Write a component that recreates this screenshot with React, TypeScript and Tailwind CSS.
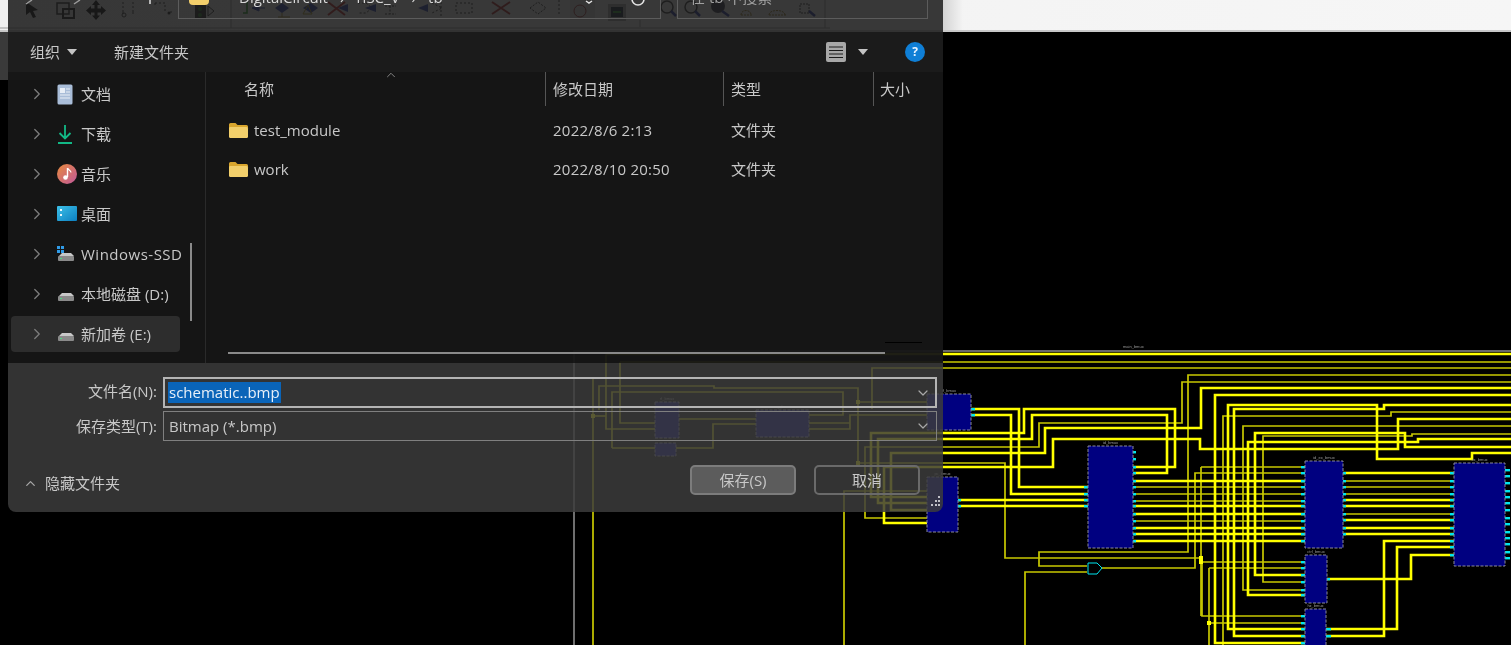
import { ChevronRight, ChevronUp, ChevronDown } from "lucide-react";

// wires: bright thick, normal, dim thin
const thickWires = [
  "M971 409H1019V487H1088",
  "M971 415H1011V494H1088",
  "M958 500H1088",
  "M958 506H1088",
  "M1133 467H1175V409H1024V433H871V497H927",
  "M1133 473H1167V415H1032V439H878V503H927",
  "M927 523H884V467H1053V439H1200V449H1398V419H1511",
  "M927 510H891V453H1045V428H1201V388H1511",
  "M1511 395H1215V643H1305",
  "M606 354H1511",
  "M1133 481H1305",
  "M1133 506H1305",
  "M1133 514H1305",
  "M1133 528H1305",
  "M1133 534H1305",
  "M1133 541H1305",
  "M1343 473H1454",
  "M1343 500H1454",
  "M1343 506H1454",
  "M1343 520H1454",
  "M1343 528H1454",
  "M1343 534H1454",
  "M1326 636H1384V541H1454",
  "M1326 629H1397V547H1454",
  "M1327 579H1411V555H1454",
  "M1511 447H1405V433H1255V575H1305",
  "M1511 439H1418V442H1248V595H1305",
  "M1511 453H1472V459H1377V405H1228V629H1305",
  "M1511 405H1384V409H1234V636H1305",
];

const thinWires = [
  "M927 518H865V447H1039V423H1182V382H1511",
  "M1087 566H1039V552H1188V375H1511",
  "M620 362H1511",
  "M872 409V368H1511",
  "M858 463H1005V558H1202V616H1305",
  "M599 410V386H714V388H858V463",
  "M858 402H927",
  "M570 378H593V645",
  "M593 416H606",
  "M606 354V429H655",
  "M620 362V423H655",
  "M612 448V392H843V415H809",
  "M612 448H655",
  "M679 419H756",
  "M756 424H713V448H676",
  "M809 423H850",
  "M809 429H850V415H927",
  "M844 645V491H927",
  "M1133 487H1305",
  "M1133 494H1305",
  "M1133 501H1305",
  "M1133 521H1305",
  "M1343 481H1454",
  "M1343 487H1454",
  "M1343 494H1454",
  "M1343 514H1454",
  "M1102 568H1195V473H1305",
  "M1201 467H1305",
  "M1201 467V616",
  "M1202 562H1305",
  "M1209 568H1305",
  "M1209 568V645",
  "M1209 623H1305",
  "M1511 434H1412V436H1263V582H1305",
  "M1511 426H1243V590H1305",
  "M1511 412H1391V416H1223V645",
  "M1025 645V572H1087",
];

const blocks = [
  { x: 927, y: 394, w: 44, h: 36, label: "if_bmux" },
  { x: 927, y: 477, w: 31, h: 55, label: "pc_bmux" },
  { x: 1088, y: 446, w: 45, h: 102, label: "id_bmux" },
  { x: 1305, y: 461, w: 38, h: 87, label: "id_ex_bmux" },
  { x: 1305, y: 555, w: 22, h: 48, label: "ctrl_bmux" },
  { x: 1305, y: 609, w: 21, h: 50, label: "hz_bmux" },
  { x: 1454, y: 463, w: 51, h: 103, label: "ex_bmux" },
  { x: 655, y: 402, w: 24, h: 36, label: "rf_bmux" },
  { x: 655, y: 443, w: 21, h: 13, label: "" },
  { x: 756, y: 410, w: 53, h: 27, label: "reg_bmux" },
];

// cyan pins [x, y, w]
const pinRows: [number, number[], number][] = [
  [971, [409, 415], 4],
  [958, [500, 506], 3],
  [1084, [487, 494, 500, 506], 4],
  [1133, [452, 459, 467, 473, 481, 487, 494, 501, 506, 514, 521, 528, 534, 541], 3],
  [1301, [467, 473, 481, 487, 494, 501, 506, 514, 521, 528, 534, 541, 562, 568, 575, 582, 590, 595, 616, 623, 629, 636, 643], 4],
  [1343, [473, 481, 487, 494, 500, 506, 514, 520, 528, 534], 3],
  [1327, [579], 3],
  [1326, [629, 636], 5],
  [1450, [473, 481, 487, 494, 500, 506, 514, 520, 528, 534, 541, 547, 555], 4],
  [1505, [470, 476, 483, 491, 497, 503, 510, 518, 524, 532, 538, 544, 552, 558], 5],
];

function Schematic() {
  return (
    <svg className="block h-[613px] w-[1511px]" viewBox="0 32 1511 613">
      <rect x="0" y="32" width="70" height="48" fill="#3a3a3a" />
      <text x="1123" y="348" fontSize="4" fill="#999" fontFamily="Liberation Sans">main_bmux</text>
      <path d="M574 645V351H1511" fill="none" stroke="#8a8a8a" strokeWidth="1.6" />
      {thinWires.map((d) => (
        <path key={d} d={d} fill="none" stroke="#c8c800" strokeWidth="1.7" />
      ))}
      {thickWires.map((d) => (
        <path key={d} d={d} fill="none" stroke="#ffff00" strokeWidth="2.6" />
      ))}
      {pinRows.map(([x, ys, w]) =>
        ys.map((y) => <rect key={`${x}-${y}`} x={x} y={y - 1} width={w} height="2.4" fill="#00e6f0" />)
      )}
      {blocks.map((b) => (
        <g key={b.x + "-" + b.y}>
          <rect x={b.x} y={b.y} width={b.w} height={b.h} fill="#000080" stroke="#8a8a9a" strokeWidth="1" strokeDasharray="3 1.5" />
          <text x={b.x + b.w / 2} y={b.y - 2} fontSize="4" textAnchor="middle" fill="#999" fontFamily="Liberation Sans">
            {b.label}
          </text>
        </g>
      ))}
      <path d="M1088 563H1097L1102 568L1097 574H1088Z" fill="#000" stroke="#00e6f0" strokeWidth="1" />
      <rect x="1199" y="556" width="4" height="8" fill="#ffff00" />
      <rect x="1207" y="621" width="4" height="4" fill="#ffff00" />
      <rect x="856" y="400" width="4" height="4" fill="#ffff00" />
      <rect x="856" y="461" width="4" height="4" fill="#ffff00" />
      <rect x="591" y="414" width="4" height="4" fill="#ffff00" />
    </svg>
  );
}

// the app toolbar that shows through the dialog's top strip
function AppToolbar() {
  return (
    <svg className="block h-[32px] w-[943px] shrink-0" viewBox="0 0 943 32">
      <path d="M26 2L26 15L30 12L33 18L36 17L33 11L38 10Z" fill="#000" />
      <rect x="57" y="3" width="12" height="11" fill="none" stroke="#222" strokeWidth="1.5" />
      <rect x="63" y="9" width="11" height="9" fill="none" stroke="#111" strokeWidth="2" />
      <path d="M96 0L100 5H97.5V8.5H101V6L106 10.5L101 15V12.5H97.5V15.5H100L96 20L92 15.5H94.5V12.5H91V15L86 10.5L91 6V8.5H94.5V5H92Z" fill="#000" />
      <path d="M123 2V12M133 2V12M123 12V16M133 12V16" stroke="#333" strokeDasharray="2 2" fill="none" />
      <circle cx="124" cy="15" r="2" fill="none" stroke="#333" />
      <path d="M155 3H165V13M155 3V6M170 12H173" stroke="#333" strokeDasharray="2 2" fill="none" />
      <circle cx="169" cy="13" r="1.5" fill="#222" />
      <rect x="195" y="3" width="11" height="16" rx="1" fill="#222" />
      <circle cx="200" cy="9" r="2" fill="#1f7a1f" />
      <circle cx="200" cy="15" r="2" fill="#1f7a1f" />
      <path d="M208 6L214 11L208 16Z" fill="none" stroke="#333" />
      <path d="M247 2V13H243" stroke="#1a9a1a" strokeWidth="1.5" fill="none" />
      <path d="M252 8L259 5V11ZM259 8H265" fill="#2b3fb0" stroke="#2b3fb0" />
      <path d="M275 8L282 3L289 8L282 13Z" fill="#2b3fb0" />
      <path d="M282 13V17M278 17H290" stroke="#a88a20" fill="none" />
      <path d="M303 8L311 3L318 8L311 13Z" fill="#2b3fb0" />
      <path d="M303 14L308 5L312 14Z" fill="none" stroke="#b09a20" />
      <path d="M328 2L345 15M345 2L328 15" stroke="#c02020" strokeWidth="2" />
      <path d="M338 8L348 4V12Z" fill="#2b3fb0" />
      <path d="M358 3H366L372 8L366 13H358" stroke="#333" strokeDasharray="2 2" fill="none" />
      <path d="M365 8L376 4V12Z" fill="#2b3fb0" />
      <path d="M385 6H396M390 6V14M385 14L396 14" stroke="#333" strokeDasharray="2 1.5" fill="none" />
      <path d="M418 8L428 4V12Z" fill="#2b3fb0" />
      <path d="M432 3L442 8L432 13" stroke="#333" strokeDasharray="2 2" fill="none" />
      <path d="M441 2V17" stroke="#333" strokeDasharray="2 2" />
      <rect x="456" y="3" width="16" height="10" fill="none" stroke="#333" strokeDasharray="2 2" />
      <path d="M492 2L510 14M510 2L492 14" stroke="#b02020" strokeWidth="2" />
      <path d="M530 8L538 2L546 8L538 14Z" fill="none" stroke="#333" strokeDasharray="2 1.5" />
      <path d="M559 0V16" stroke="#333" strokeDasharray="2 2" />
      <rect x="570" y="0" width="25" height="20" fill="#ddd" />
      <circle cx="580" cy="11" r="6" fill="none" stroke="#a03030" />
      <rect x="608" y="4" width="18" height="17" fill="#aaa" />
      <rect x="611" y="7" width="12" height="10" fill="#123" />
      <path d="M613 12H621" stroke="#2a9a2a" strokeWidth="2" />
      <circle cx="667" cy="7" r="6" fill="none" stroke="#333" strokeWidth="1.5" />
      <path d="M671 11L676 16" stroke="#2330a0" strokeWidth="2.5" />
      <circle cx="691" cy="7" r="6" fill="none" stroke="#333" strokeWidth="1.5" />
      <path d="M695 11L700 16" stroke="#2330a0" strokeWidth="2.5" />
      <circle cx="718" cy="6" r="7" fill="#334" />
      <path d="M722 11L729 16" stroke="#2330a0" strokeWidth="2.5" />
      <path d="M741 15C741 9 751 9 751 15M741 15H753" stroke="#9a7a20" fill="none" strokeDasharray="2 1" />
      <path d="M769 15C769 9 785 9 785 15M769 15H787" stroke="#9a7a20" fill="none" strokeDasharray="2 1" />
      <rect x="800" y="4" width="9" height="9" fill="none" stroke="#333" strokeDasharray="2 1" />
      <path d="M809 11L815 16" stroke="#2330a0" strokeWidth="2.5" />
      <path d="M0 28H830" stroke="#999" />
      <path d="M231 0V28M640 20V27M825 0V28" stroke="#999" />
    </svg>
  );
}

function FolderIcon() {
  return (
    <svg width="21" height="17" viewBox="0 0 21 17">
      <path d="M1 2.5Q1 1 2.5 1H7.5L9.5 3H18.5Q20 3 20 4.5V6H1Z" fill="#d9a62e" />
      <path d="M1 6Q1 5 2.5 5H18.5Q20 5 20 6.5V14.5Q20 16 18.5 16H2.5Q1 16 1 14.5Z" fill="#f2cf6b" />
    </svg>
  );
}

function DocIcon() {
  return (
    <svg width="16" height="21" viewBox="0 0 16 21">
      <rect x="0.5" y="0.5" width="15" height="20" rx="1.5" fill="#a9bdd8" />
      <rect x="3" y="4" width="5" height="5" fill="#e8eef6" />
      <path d="M9 5H13M9 8H13M3 11H13M3 14H13" stroke="#e8eef6" />
    </svg>
  );
}

function DownloadIcon() {
  return (
    <svg width="16" height="21" viewBox="0 0 16 21">
      <path d="M8 1V14M2.5 9L8 14.5L13.5 9" fill="none" stroke="#12b886" strokeWidth="1.8" />
      <path d="M1 19H15" stroke="#12b886" strokeWidth="1.8" />
    </svg>
  );
}

function MusicIcon() {
  return (
    <svg width="20" height="20" viewBox="0 0 20 20">
      <defs>
        <linearGradient id="music" x1="0" y1="0" x2="1" y2="1">
          <stop offset="0" stopColor="#e88a3c" />
          <stop offset="1" stopColor="#c0589c" />
        </linearGradient>
      </defs>
      <circle cx="10" cy="10" r="10" fill="url(#music)" />
      <path d="M10.5 4V13" stroke="#fff" strokeWidth="1.4" />
      <path d="M10.5 4C11 6 14 6 14 8.5" fill="none" stroke="#fff" strokeWidth="1.2" />
      <circle cx="8.5" cy="13.5" r="2.3" fill="#fff" />
    </svg>
  );
}

function DesktopIcon() {
  return (
    <svg width="20" height="16" viewBox="0 0 20 16">
      <defs>
        <linearGradient id="desk" x1="0" y1="0" x2="1" y2="1">
          <stop offset="0" stopColor="#3cc0e8" />
          <stop offset="1" stopColor="#0c7fc0" />
        </linearGradient>
      </defs>
      <rect width="20" height="15" rx="1" fill="url(#desk)" />
      <rect x="3" y="3" width="2" height="2" fill="#e8f6fc" />
      <rect x="3" y="8" width="2" height="2" fill="#e8f6fc" />
    </svg>
  );
}

function DriveIcon({ windows }: { windows?: boolean }) {
  return (
    <svg width="18" height="16" viewBox="0 0 18 16">
      {windows && <path d="M0 0H3V3H0ZM4 0H7V3H4ZM0 4H3V7H0ZM4 4H7V7H4Z" fill="#2f9be8" />}
      <path d="M2 10L5 7H14L17 10Z" fill="#c8c8c8" />
      <rect x="1" y="10" width="16" height="5" rx="1" fill="#8a8a8a" />
      <rect x="3" y="12" width="2" height="1" fill="#4ade80" />
    </svg>
  );
}

function ListViewIcon() {
  return (
    <svg width="20" height="20" viewBox="0 0 20 20">
      <rect width="20" height="20" rx="2" fill="#a8a8a8" />
      <path d="M3 5H17M3 8.5H17M3 12H17M3 15.5H17" stroke="#1c1c1c" strokeWidth="1.2" />
    </svg>
  );
}

function Caret() {
  return (
    <svg width="10" height="6" viewBox="0 0 10 6">
      <path d="M0 0H10L5 6Z" fill="#c4c4c4" />
    </svg>
  );
}

const navItems = [
  { label: "文档", icon: <DocIcon /> },
  { label: "下载", icon: <DownloadIcon /> },
  { label: "音乐", icon: <MusicIcon /> },
  { label: "桌面", icon: <DesktopIcon /> },
  { label: "Windows-SSD", icon: <DriveIcon windows />, wide: true },
  { label: "本地磁盘 (D:)", icon: <DriveIcon /> },
  { label: "新加卷 (E:)", icon: <DriveIcon />, active: true },
];

const files = [
  { name: "test_module", date: "2022/8/6 2:13" },
  { name: "work", date: "2022/8/10 20:50" },
];

function SaveDialog() {
  return (
    <div className="absolute left-[8px] top-0 flex h-[512px] w-[935px] flex-col overflow-hidden rounded-b-lg font-['Open_Sans','Noto_Sans_CJK_SC',sans-serif] text-[15px] text-[#c8c8c8]">
      {/* address row, cut off by the top of the picture */}
      <div className="relative flex h-[32px] items-start bg-[rgba(28,28,28,0.87)]">
        <div className="ml-[170px] -mt-[12px] flex h-[31px] w-[483px] items-center border border-[#5c5c5c] pb-[12px] pl-[10px] text-[#d8d8d8]">
          <div className="h-[14px] w-[20px] rounded-sm bg-[#f2cf6b]" />
          <span className="ml-[30px]">DigitalCircuit</span>
          <span className="mx-[12px]">›</span>
          <span>riSC_V</span>
          <span className="mx-[12px]">›</span>
          <span>tb</span>
        </div>
        <div className="ml-[16px] -mt-[12px] flex h-[31px] w-[251px] items-center border border-[#5c5c5c] pb-[12px] pl-[12px] text-[#a0a0a0]">
          在 tb 中搜索
        </div>
        <svg className="absolute left-0 top-0" width="935" height="10" viewBox="0 0 935 10">
          <path d="M18 4L24 0M66 4L72 0" stroke="#9a9a9a" strokeWidth="1.5" fill="none" />
          <path d="M142 0V4" stroke="#e0e0e0" strokeWidth="1.5" />
          <path d="M578 1L581 3L584 1" stroke="#e0e0e0" strokeWidth="1.5" fill="none" />
          <circle cx="630" cy="-1" r="6" stroke="#e4e4e4" strokeWidth="1.6" fill="none" />
        </svg>
      </div>

      <div className="flex h-[40px] items-center justify-between bg-[rgba(28,28,28,0.95)] pl-[22px] pr-[18px]">
        <div className="flex items-center">
          <span>组织</span>
          <span className="ml-[7px]">
            <Caret />
          </span>
          <span className="ml-[37px]">新建文件夹</span>
        </div>
        <div className="flex items-center">
          <ListViewIcon />
          <span className="ml-[12px]">
            <Caret />
          </span>
          <div className="ml-[37px] flex h-[20px] w-[20px] items-center justify-center rounded-full bg-[#0f7fd6] text-[12px] font-bold leading-none text-[#e8f4ff]">
            ?
          </div>
        </div>
      </div>

      <div className="flex h-[291px] bg-[rgba(22,22,22,0.96)]">
        <div className="relative flex w-[198px] shrink-0 flex-col gap-[4px] border-r border-[#2a2a2a] pt-[4px] pl-[3px]">
          {navItems.map((item) => (
            <div
              key={item.label}
              className={`flex h-[36px] w-[169px] items-center rounded-sm ${item.active ? "bg-[#2d2d2d]" : ""}`}
            >
              <ChevronRight size={18} strokeWidth={1.7} className="ml-[17px] shrink-0 text-[#7d7d7d]" />
              <div className="ml-[11px] flex w-[24px] shrink-0 items-center">{item.icon}</div>
              <span className={`whitespace-nowrap ${item.wide ? "tracking-[0.5px]" : ""}`}>{item.label}</span>
            </div>
          ))}
          <div className="absolute left-[182px] top-[171px] h-[78px] w-[2px] bg-[#8a8a8a]" />
        </div>

        <div className="relative flex flex-1 flex-col">
          <div className="flex h-[34px] items-center">
            <div className="relative w-[339px] pl-[38px]">
              名称
              <ChevronUp size={14} strokeWidth={1.6} className="absolute left-[178px] -top-[10px] text-[#8a8a8a]" />
            </div>
            <div className="flex h-[34px] w-[178px] items-center border-l border-[#555] pl-[7px]">修改日期</div>
            <div className="flex h-[34px] w-[150px] items-center border-l border-[#555] pl-[7px]">类型</div>
            <div className="flex h-[34px] items-center border-l border-[#555] pl-[6px]">大小</div>
          </div>
          <div className="pt-[5px]">
            {files.map((f) => (
              <div key={f.name} className="flex h-[39px] items-center">
                <div className="flex w-[347px] items-center pl-[22px]">
                  <FolderIcon />
                  <span className="ml-[5px]">{f.name}</span>
                </div>
                <div className="w-[178px] tracking-[0.25px]">{f.date}</div>
                <div>文件夹</div>
              </div>
            ))}
          </div>
          <div className="absolute right-[21px] top-[270px] h-px w-[37px] bg-black" />
          <div className="mb-[9px] ml-[22px] mt-auto h-[2px] w-[657px] bg-[#8a8a8a]" />
        </div>
      </div>

      <div className="relative flex flex-1 flex-col bg-[rgba(60,60,60,0.85)] pt-[14px]">
        <div className="flex items-center">
          <div className="w-[149px] pb-[2px] text-right">文件名(N):</div>
          <div className="ml-[6px] flex h-[31px] w-[774px] items-center justify-between border-2 border-[#b4b4b4] pl-[3px] pr-[4px]">
            <span className="bg-[#0a64b8] px-[1px] leading-[21px] text-[#e8f0f8]">schematic..bmp</span>
            <ChevronDown size={16} strokeWidth={1.8} className="text-[#a8a8a8]" />
          </div>
        </div>
        <div className="mt-[3px] flex items-center">
          <div className="w-[149px] text-right">保存类型(T):</div>
          <div className="ml-[6px] flex h-[30px] w-[774px] items-center justify-between border border-[#808080] pl-[5px] pr-[5px]">
            <span>Bitmap (*.bmp)</span>
            <ChevronDown size={16} strokeWidth={1.8} className="text-[#a8a8a8]" />
          </div>
        </div>
        <div className="mt-[24px] flex items-center justify-between pl-[15px] pr-[23px]">
          <div className="mt-[6px] flex items-center gap-[7px]">
            <ChevronUp size={15} strokeWidth={2} className="text-[#a8a8a8]" />
            <span>隐藏文件夹</span>
          </div>
          <div className="flex gap-[18px]">
            <div className="flex h-[30px] w-[106px] items-center justify-center rounded-[5px] border-2 border-[#7c7c7c] bg-[#5c5c5c]">保存(S)</div>
            <div className="flex h-[30px] w-[106px] items-center justify-center rounded-[5px] border-2 border-[#6a6a6a]">取消</div>
          </div>
        </div>
        <svg className="absolute bottom-[5px] right-[2px]" width="11" height="11" viewBox="0 0 11 11">
          <path d="M8 0H10V2H8ZM5 4H7V6H5ZM8 4H10V6H8ZM1 8H3V10H1ZM5 8H7V10H5ZM8 8H10V10H8Z" fill="#c0c0c8" />
        </svg>
      </div>
    </div>
  );
}

export default function App() {
  return (
    <div className="h-[645px] w-[1511px] overflow-hidden bg-black">
      <div className="relative h-[645px] w-[1511px] blur-[0.4px]">
        <div className="flex h-[32px] border-b-2 border-[#c8c8c8] bg-gradient-to-r from-[#f0f0f0] to-[#f6f6f6]">
          <AppToolbar />
          <div className="w-[20px] bg-gradient-to-r from-[#d4d4d4] to-[#f4f4f4]" />
        </div>
        <Schematic />
        <SaveDialog />
      </div>
    </div>
  );
}
